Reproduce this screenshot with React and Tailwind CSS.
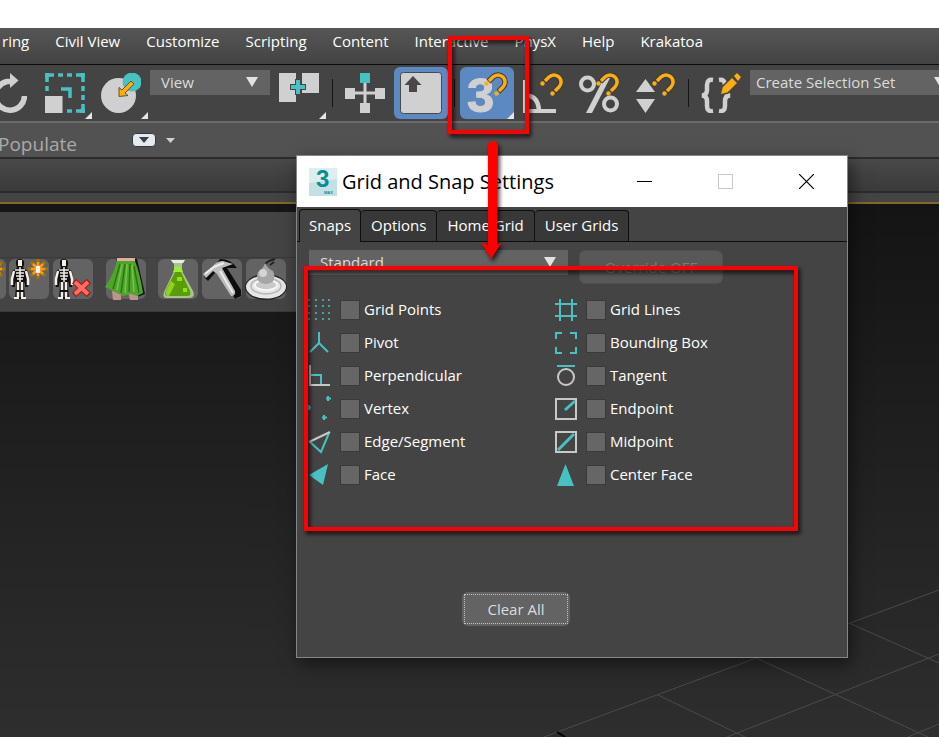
import React, { useState } from "react";

const menuItems = [
  "ring",
  "Civil View",
  "Customize",
  "Scripting",
  "Content",
  "Interactive",
  "PhysX",
  "Help",
  "Krakatoa",
];

const Svg = ({ children, className = "size-10", viewBox = "0 0 40 40" }) => (
  <svg className={`${className} shrink-0`} viewBox={viewBox} fill="none" aria-hidden="true">
    {children}
  </svg>
);

// Orange magnet shared by all the snap toggles
const Magnet = () => (
  <>
    <path d="M21.500 8.500 L26 4 A7 7 0 0 1 36 14 L31.500 18.500" stroke="#3a3a3a" strokeWidth="5.500" />
    <path d="M22 8 L26 4 A7 7 0 0 1 36 14 L32 18" stroke="#fdae0f" strokeWidth="3.500" />
    <circle cx="19.500" cy="10.500" r="2.200" fill="#fdae0f" />
    <circle cx="29.500" cy="20.500" r="2.200" fill="#fdae0f" />
  </>
);

const ToolButton = ({ label, flyout, active, className = "", children }) => (
  <button
    type="button"
    aria-label={label}
    className={`relative flex h-[52px] shrink-0 items-center ${
      active ? "w-[54px] justify-center rounded-md bg-[#5d89c3]" : ""
    } ${flyout && !active ? "w-[47px]" : ""} ${className}`}
  >
    {children}
    {flyout && (
      <svg className="absolute right-0 bottom-0 size-[7px]" viewBox="0 0 7 7" aria-hidden="true">
        <path d="M7 0 V7 H0 Z" fill="#e4e4e4" />
      </svg>
    )}
  </button>
);

const Separator = ({ className }) => <div className={`h-7 w-px shrink-0 bg-[#161616] ${className}`} />;

const DropDown = ({ label, value, className, selectClass, arrowClass }) => (
  <div className={`relative overflow-hidden ${className}`}>
    <select
      aria-label={label}
      defaultValue={value}
      className={`h-full w-full appearance-none bg-[#636363] text-[#dcdcdc] outline-none ${selectClass}`}
    >
      <option>{value}</option>
    </select>
    <svg
      className={`pointer-events-none absolute top-[7px] h-[10px] w-3 ${arrowClass}`}
      viewBox="0 0 12 10"
      aria-hidden="true"
    >
      <path d="M0 0 H12 L6 10 Z" fill="#e2e2e2" />
    </svg>
  </div>
);

const MenuBar = () => (
  <nav className="flex h-[37px] items-center gap-[26px] overflow-hidden border-b border-[#0c0c0c] bg-linear-to-b from-[#565656] to-[#434343] pb-2.5 pl-0.5 text-[15px] text-white">
    {menuItems.map((item) => (
      <button key={item} type="button" className="shrink-0 whitespace-nowrap">
        {item}
      </button>
    ))}
  </nav>
);

const MainToolbar = () => (
  <div className="flex h-[58px] items-start overflow-hidden border-b-2 border-[#6a6a6a] bg-[#444] pt-0.5 text-[15px]">
    <ToolButton label="Rotate">
      <Svg className="h-10 w-[27px]" viewBox="13 0 27 40">
        <path d="M25 8.500 H20 A14.500 14.500 0 1 0 37.500 23" stroke="#d0d0d0" strokeWidth="5.500" />
        <path d="M23 0 L31.500 7.500 L23 15 Z" fill="#d0d0d0" />
      </Svg>
    </ToolButton>
    <ToolButton label="Scale" flyout className="ml-[18px]">
      <Svg>
        <path d="M2 18 V2 H38 V38 H19" stroke="#47c1c1" strokeWidth="3.500" strokeDasharray="5 4" />
        <path d="M0 2 H5 M2 0 V5 M35 2 H40 M38 0 V5 M38 35 V40 M35 38 H40" stroke="#47c1c1" strokeWidth="3.500" />
        <path d="M16 16 H25 V25" stroke="#47c1c1" strokeWidth="3.500" />
        <rect x="0" y="23" width="17.500" height="17" fill="#d0d0d0" />
      </Svg>
    </ToolButton>
    <ToolButton label="Select and Place" flyout className="ml-[9px]">
      <Svg>
        <circle cx="17.500" cy="22.500" r="17.500" fill="#d0d0d0" />
        <circle cx="31" cy="9" r="9.500" fill="#47c1c1" />
        <path
          d="M30 8 L33 11 L24 20 L27 22.500 L18 23.500 L18 14.500 L21 17 Z"
          fill="#fdae0f"
          stroke="#6b5320"
          strokeWidth="1"
        />
      </Svg>
    </ToolButton>
    <DropDown
      label="Reference Coordinate System"
      value="View"
      className="mt-[3px] ml-0.5 h-[25px] w-[120px] shrink-0"
      selectClass="pl-[11px]"
      arrowClass="right-3"
    />
    <ToolButton label="Use Pivot Point Center" flyout className="ml-[9px]">
      <Svg>
        <rect x="0" y="0" width="17" height="29" fill="#d0d0d0" />
        <rect x="23" y="0" width="17" height="20" fill="#d0d0d0" />
        <path d="M19 6 V22 M11 14 H27" stroke="#444" strokeWidth="6" />
        <path d="M19 7 V21 M12 14 H26" stroke="#47c1c1" strokeWidth="4" />
      </Svg>
    </ToolButton>
    <Separator className="mt-3 ml-1.5" />
    <ToolButton label="Select and Manipulate" className="ml-3">
      <Svg>
        <path d="M20 8 V32 M8 20 H32" stroke="#d0d0d0" strokeWidth="3" />
        <rect x="15" y="0" width="10" height="10" fill="#47c1c1" />
        <rect x="15" y="30" width="10" height="10" fill="#d0d0d0" />
        <rect x="0" y="15" width="10" height="11" fill="#d0d0d0" />
        <rect x="30" y="15" width="10" height="11" fill="#d0d0d0" />
      </Svg>
    </ToolButton>
    <ToolButton label="Keyboard Shortcut Override" active className="ml-[9px]">
      <Svg className="size-[42px]" viewBox="0 0 42 42">
        <rect x="0.500" y="0.500" width="41" height="41" rx="3" fill="#d0d0d0" stroke="#4a4a4a" />
        <path d="M13 4 L21.500 13 H17 V20 H9 V13 H4.500 Z" fill="#484848" />
      </Svg>
    </ToolButton>
    <Separator className="mt-3 ml-1.5" />
    <ToolButton label="Snaps Toggle" active flyout className="ml-[5px]">
      <Svg className="size-10 overflow-visible">
        <text
          x="0"
          y="39"
          fontFamily="Liberation Sans, sans-serif"
          fontWeight="bold"
          fontSize="49"
          fill="#d0d0d0"
          stroke="#d0d0d0"
          strokeWidth="1"
        >
          3
        </text>
        <Magnet />
      </Svg>
    </ToolButton>
    <ToolButton label="Angle Snap" className="ml-[9px]">
      <Svg>
        <path d="M2 7 V38 H33" stroke="#d0d0d0" strokeWidth="4" />
        <path d="M3 22.500 Q15.500 23 16 38" stroke="#d0d0d0" strokeWidth="4.500" />
        <Magnet />
      </Svg>
    </ToolButton>
    <ToolButton label="Percent Snap" className="ml-4">
      <Svg>
        <circle cx="8.500" cy="11" r="6.500" stroke="#d0d0d0" strokeWidth="4" />
        <circle cx="31.500" cy="31" r="6.500" stroke="#d0d0d0" strokeWidth="4" />
        <path d="M7 40 L26 3 H32 L13 40 Z" fill="#d0d0d0" />
        <Magnet />
      </Svg>
    </ToolButton>
    <ToolButton label="Spinner Snap" className="ml-4">
      <Svg>
        <path d="M1 19 L10.500 6 L20 19 Z M1 26 H20 L10.500 40 Z" fill="#d0d0d0" />
        <Magnet />
      </Svg>
    </ToolButton>
    <Separator className="mt-3 ml-[13px]" />
    <ToolButton label="Edit Named Selection Sets" className="ml-3">
      <Svg>
        <path
          d="M12 7 Q6 6 6 12 V17 Q6 22 1 22.500 Q6 23 6 28 V33 Q6 39 12 38"
          stroke="#d0d0d0"
          strokeWidth="4.500"
        />
        <path
          d="M18 7 Q24 6 24 12 V17 Q24 22 29 22.500 Q24 23 24 28 V33 Q24 39 18 38"
          stroke="#d0d0d0"
          strokeWidth="4.500"
        />
        <path d="M19 22 L21 14 L31 4 L37 10 L27 20 Z" fill="#fdae0f" stroke="#444" strokeWidth="1.500" />
        <path d="M33 3 L36 0 L40 4 L37 8 Z" fill="#fdae0f" />
      </Svg>
    </ToolButton>
    <DropDown
      label="Named Selection Sets"
      value="Create Selection Set"
      className="mt-[3px] ml-[9px] h-[25px] min-w-0 flex-1"
      selectClass="pl-1.5"
      arrowClass="-right-[7px]"
    />
  </div>
);

const Skeleton = () => (
  <g transform="translate(-1 0)">
    <path d="M12 0 Q17 0 16 6 L15 9 L20 12 L21 22 L20 28 H17 V22 L16 26 L17 40 H7 L8 26 L7 22 V28 H4 L3 22 L4 12 L9 9 L8 5 Q7 0 12 0 Z" fill="#111" />
    <path d="M10 1 H14 V7 H10 Z" fill="#f4efe8" />
    <path d="M12 8 V23 M7 11 H17 M8 14 H16 M8 17 H16 M9 20 H15" stroke="#f4efe8" strokeWidth="1.500" />
    <path d="M6 12 L4 20 V26 M18 12 L20 20 V26 M10 23 V31 M14 23 V31 M10 33 V38 M14 33 V38" stroke="#f4efe8" strokeWidth="2.500" />
    <path d="M6 39 H11 M13 39 H18" stroke="#f4efe8" strokeWidth="2" />
  </g>
);

const Spark = () => (
  <>
    <path d="M29 0 V20 M19 10 H39 M22 3 L36 17 M36 3 L22 17" stroke="#a87400" strokeWidth="3" />
    <path d="M29 3 V17 M22 10 H36 M24 5 L34 15 M34 5 L24 15" stroke="#ff9a16" strokeWidth="2.500" />
    <rect x="27" y="7" width="4" height="7" fill="#e8f4ff" />
  </>
);

const scriptTools = [
  {
    name: "Create Bones",
    gap: "ml-[3px]",
    icon: (
      <>
        <Skeleton />
        <Spark />
      </>
    ),
  },
  {
    name: "Delete Bones",
    gap: "ml-1",
    icon: (
      <>
        <Skeleton />
        <path d="M21 22 L36 36 M36 22 L21 36" stroke="#a51d17" strokeWidth="6" />
        <path d="M22 23 L35 35 M35 23 L22 35" stroke="#ff6c62" strokeWidth="4" />
      </>
    ),
  },
  {
    name: "Cloth",
    gap: "ml-[13px]",
    icon: (
      <>
        <path d="M10 0 H31 L39 35 L31 38 Z" fill="#111" />
        <path d="M6 32 H15 V41 H7 Z M22 33 H32 V41 H24 Z" fill="#bf938b" />
        <path d="M11 -1 H29 V3 H11 Z" fill="#e3ada2" />
        <path d="M11 2 H29 Q34 14 37 34 L31 37 L25 35 L17 37 L11 34 L5 31 L-1 28 Q7 17 11 2 Z" fill="#4fa52a" />
        <path d="M14 5 L7 30 M19 5 L15 34 M24 5 L23 33 M28 7 L33 34" stroke="#2f7414" strokeWidth="1.500" />
        <path d="M16 5 L11 31 M21 5 L19 34 M26 6 L28 33" stroke="#72c649" strokeWidth="1.500" />
      </>
    ),
  },
  {
    name: "Flask",
    gap: "ml-3",
    icon: (
      <>
        <path d="M13 1 H27 L24 5 V12 L35 32 Q38 39 31 39 H9 Q4 39 6 33 L16 12 V5 Z" fill="#a9c58c" />
        <path d="M13 1 H27 L25 4 H15 Z" fill="#e4f0da" />
        <path d="M17 8 H23 V13 L32 32 Q34 37 29 37 H10 Q5 37 8 31 L17 13 Z" fill="#5c9c06" />
        <path d="M17 8 H23 L25 13 H15 Z" fill="#9cf02b" />
        <path d="M13 22 L8 32 Q6 37 11 37 L17 25 Z" fill="#8fd21f" />
        <path d="M19 18 H24 V22 H19 Z M25 29 H29 V33 H25 Z" fill="#8be516" />
      </>
    ),
  },
  {
    name: "Hammer",
    gap: "ml-1",
    icon: (
      <>
        <path d="M17 11 L33 40 L39 37 V31 L25 9 L35 9 Q29 0 18 0 L9 11 L2 18 L6 22 L13 14 Z" fill="#0d0d0d" />
        <path d="M1 15 L11 7 Q15 2 21 2 L31 5 L20 9 L33 32 Q34 37 29 37 L15 15 L11 12 L4 19 Z" fill="#bcbcbc" />
        <path d="M3 15 L12 8 L22 4 M18 12 L31 34" stroke="#ececec" strokeWidth="2" />
      </>
    ),
  },
  {
    name: "Liquid",
    gap: "ml-1",
    icon: (
      <>
        <path d="M19 5 L23 2 L29 0 M24 6 L28 3" stroke="#222" strokeWidth="2" />
        <ellipse cx="20" cy="28" rx="21" ry="13" fill="#222" />
        <ellipse cx="20" cy="28" rx="20" ry="11.500" fill="#e6e6e6" />
        <ellipse cx="20" cy="27" rx="15" ry="8" stroke="#b4b4b4" strokeWidth="1.500" />
        <ellipse cx="20" cy="26" rx="11" ry="5" fill="#c9c9c9" stroke="#fafafa" strokeWidth="1.500" />
        <path d="M19 4 Q22 10 27 12 Q32 24 20 25 Q8 24 12 13 Q17 10 19 4 Z" fill="#a6a6a6" />
        <circle cx="17" cy="14" r="4" fill="#d4d4d4" />
      </>
    ),
  },
];

const ScriptToolbar = () => (
  <div className="w-80 border-t-8 border-[#161616] bg-[#444]">
    <div className="h-[46px] border-b border-[#3a3a3a]" />
    <div className="flex h-[54px] items-start overflow-hidden border-b border-[#3a3a3a] pt-px">
      <button type="button" aria-label="Bone Tools" className="h-10 w-1.5 shrink-0 overflow-hidden rounded-r-md bg-[#636363]">
        <Svg className="h-10 w-1.5" viewBox="34 0 6 40">
          <Spark />
        </Svg>
      </button>
      {scriptTools.map((tool) => (
        <button
          key={tool.name}
          type="button"
          aria-label={tool.name}
          className={`size-10 shrink-0 rounded-md bg-[#636363] ${tool.gap}`}
        >
          <Svg className="size-10 overflow-visible">{tool.icon}</Svg>
        </button>
      ))}
    </div>
  </div>
);

const teal = "#47c1c1";

const snapOptions = [
  {
    name: "Grid Points",
    icon: [1, 7, 14, 20].flatMap((y) =>
      [0, 7, 14, 20].map((x) => <circle key={`${x}-${y}`} cx={x} cy={y} r="1" fill={teal} />)
    ),
  },
  {
    name: "Grid Lines",
    icon: <path d="M5 0 V22 M17 0 V22 M0 5 H22 M0 17 H22" stroke={teal} strokeWidth="2" />,
  },
  { name: "Pivot", icon: <path d="M10 0 V11 L1 20 M10 11 L19 20" stroke={teal} strokeWidth="2" /> },
  {
    name: "Bounding Box",
    icon: <path d="M1 7 V1 H7 M15 1 H21 V7 M21 15 V21 H15 M7 21 H1 V15" stroke={teal} strokeWidth="2" />,
  },
  {
    name: "Perpendicular",
    icon: (
      <>
        <path d="M1 0 V20 H21" stroke="#c8c8c8" strokeWidth="2" />
        <path d="M2 10 H12 V19" stroke={teal} strokeWidth="2" />
      </>
    ),
  },
  {
    name: "Tangent",
    icon: (
      <>
        <path d="M2 1 H20" stroke={teal} strokeWidth="2" />
        <circle cx="11" cy="12" r="8" stroke="#c8c8c8" strokeWidth="2" />
      </>
    ),
  },
  {
    name: "Vertex",
    icon: <path d="M19 -2 V3 M17 0.500 H22 M15 17 V22 M13 19.500 H18 M0 7 V12 M-1 9.500 H2" stroke={teal} strokeWidth="2" />,
  },
  {
    name: "Endpoint",
    icon: (
      <>
        <rect x="1" y="1" width="20" height="20" stroke="#c8c8c8" strokeWidth="2" />
        <path d="M10 12 L20 3" stroke={teal} strokeWidth="3" />
      </>
    ),
  },
  {
    name: "Edge/Segment",
    icon: (
      <>
        <path d="M1 11 L12 21 L20 2" stroke={teal} strokeWidth="2" />
        <path d="M0 11 L21 1" stroke="#c8c8c8" strokeWidth="2" />
      </>
    ),
  },
  {
    name: "Midpoint",
    icon: (
      <>
        <rect x="1" y="1" width="20" height="20" stroke="#c8c8c8" strokeWidth="2" />
        <path d="M3 19 L19 3" stroke={teal} strokeWidth="3" />
      </>
    ),
  },
  { name: "Face", icon: <path d="M0 11 L19 0 L14 21 Z" fill={teal} /> },
  { name: "Center Face", icon: <path d="M10.500 0 L19 22 H2 Z" fill={teal} /> },
];

const tabs = ["Snaps", "Options", "Home Grid", "User Grids"];

const SnapDialog = () => {
  const [activeTab, setActiveTab] = useState("Snaps");
  const [checked, setChecked] = useState([]);

  const toggle = (name) =>
    setChecked((prev) => (prev.includes(name) ? prev.filter((item) => item !== name) : [...prev, name]));

  return (
    <section
      aria-label="Grid and Snap Settings"
      className="absolute top-[155px] left-[296px] flex h-[503px] w-[552px] flex-col border border-[#858585] bg-[#444] text-[15px] text-white shadow-[3px_6px_16px_rgba(0,0,0,0.5)]"
    >
      <header className="flex h-[51px] items-center bg-white pl-3 text-black">
        <svg className="size-7 shrink-0" viewBox="0 0 28 28" aria-hidden="true">
          <rect width="28" height="28" fill="#dceef0" />
          <path d="M0 15 L28 11 V28 H0 Z" fill="#c3e1e5" />
          <text x="7" y="19" fontFamily="Liberation Sans, sans-serif" fontWeight="bold" fontSize="24" fill="#0b8c94">
            3
          </text>
          <text x="15" y="26" fontFamily="Liberation Sans, sans-serif" fontWeight="bold" fontSize="4" fill="#0b8c94">
            MAX
          </text>
        </svg>
        <h1 className="ml-[5px] flex-1 text-xl whitespace-nowrap">Grid and Snap Settings</h1>
        <div className="flex pr-[33px]">
          <button type="button" aria-label="Minimize" className="mr-[66px]">
            <Svg className="size-[15px]" viewBox="0 0 15 15">
              <path d="M0 7.500 H15" stroke="#000" />
            </Svg>
          </button>
          <button type="button" aria-label="Maximize" disabled className="mr-[66px]">
            <Svg className="size-[15px]" viewBox="0 0 15 15">
              <rect x="0.500" y="0.500" width="14" height="14" stroke="#c8c8c8" />
            </Svg>
          </button>
          <button type="button" aria-label="Close">
            <Svg className="size-[15px]" viewBox="0 0 15 15">
              <path d="M0 0 L15 15 M15 0 L0 15" stroke="#000" strokeWidth="1.200" />
            </Svg>
          </button>
        </div>
      </header>

      <div role="tablist" className="flex h-[35px] items-end border-b border-[#0e0e0e] pt-0.5 pl-0.5">
        {tabs.map((tab) => (
          <button
            key={tab}
            type="button"
            role="tab"
            aria-selected={tab === activeTab}
            onClick={() => setActiveTab(tab)}
            className={`rounded-t-sm border border-b-0 border-[#0e0e0e] pb-0.5 whitespace-nowrap ${
              tab === activeTab ? "-mb-px h-[33px] bg-[#444] px-[9px]" : "h-[31px] border-l-0 bg-[#383838] px-2.5"
            }`}
          >
            {tab}
          </button>
        ))}
      </div>

      <div className="flex items-start gap-[11px] pt-2 pl-3">
        <DropDown
          label="Snap Type"
          value="Standard"
          className="h-[25px] w-[259px]"
          selectClass="pl-[11px]"
          arrowClass="right-3"
        />
        <button
          type="button"
          disabled
          className="h-[34px] w-36 rounded-md border border-[#4e4e4e] bg-[#585858] text-[#7c7c7c]"
        >
          Override OFF
        </button>
      </div>

      <div className="grid grid-cols-[246px_1fr] pt-[9px] pl-3">
        {snapOptions.map(({ name, icon }) => (
          <label key={name} className="flex h-[33px] items-center whitespace-nowrap">
            <Svg className="size-[22px] overflow-visible" viewBox="0 0 22 22">
              {icon}
            </Svg>
            <input
              type="checkbox"
              checked={checked.includes(name)}
              onChange={() => toggle(name)}
              className="ml-[9px] size-5 appearance-none border border-[#3a3a3a] bg-[#666] checked:bg-[#47c1c1]"
            />
            <span className="ml-1">{name}</span>
          </label>
        ))}
      </div>

      <footer className="mt-auto flex justify-center pb-[31px]">
        <button
          type="button"
          onClick={() => setChecked([])}
          className="mr-28 h-[34px] w-[108px] rounded-md bg-[#636363] p-0.5 text-[#dcdcdc]"
        >
          <span className="flex h-full items-center justify-center border border-dotted border-[#c0c0c0]">
            Clear All
          </span>
        </button>
      </footer>
    </section>
  );
};

const Annotations = () => (
  <div className="pointer-events-none">
    <div className="absolute top-9 left-[448px] h-[98px] w-[81px] border-4 border-[#f00] drop-shadow-[2px_3px_2px_rgba(0,0,0,0.8)]" />
    <div className="absolute top-[266px] left-[304px] h-[265px] w-[494px] border-4 border-[#f00] drop-shadow-[2px_3px_2px_rgba(0,0,0,0.8)]" />
    <svg
      className="absolute top-[141px] left-[481px] h-[118px] w-[21px] overflow-visible drop-shadow-[2px_3px_2px_rgba(0,0,0,0.7)]"
      viewBox="0 0 21 118"
      aria-hidden="true"
    >
      <path d="M7 4 Q8 0 12 0 Q16 0 17 4 L16 104 L21 101 L10 118 L0 101 L7 104 Z" fill="#f00" />
    </svg>
  </div>
);

const Viewport = () => (
  <main className="relative flex-1 overflow-hidden bg-linear-to-b from-[#141414] to-[#2e2e2e]">
    <ScriptToolbar />
    <svg
      className="absolute right-0 bottom-0 h-[147px] w-[395px]"
      viewBox="0 0 395 147"
      stroke="#4b4b4b"
      aria-hidden="true"
    >
      <path d="M0 147 L395 0 M305 33 L395 73 M212 68 L384 147 M114 105 L201 147 M183 147 L395 64 M364 147 L395 134" />
      <path d="M13 142 L21 147" stroke="#000" strokeWidth="2" />
    </svg>
  </main>
);

const App = () => (
  <div className="relative flex min-h-screen flex-col overflow-hidden bg-white pt-7 font-['Open_Sans',sans-serif]">
    <MenuBar />
    <MainToolbar />
    <div className="flex h-9 items-center border-b-2 border-[#2c2c2c] bg-[#525252]">
      <span className="-ml-0.5 pt-2 text-[19px] text-[#a9a9a9]">Populate</span>
      <button type="button" aria-label="Minimize Ribbon" className="ml-[55px] flex h-3.5 w-6 items-center justify-center rounded-sm border border-[#2f3b44] bg-[#e6eaee]">
        <Svg className="h-1.5 w-2.5" viewBox="0 0 10 6">
          <path d="M0 0 H10 L5 6 Z" fill="#333f4a" />
        </Svg>
      </button>
      <button type="button" aria-label="Ribbon Options" className="ml-2.5">
        <Svg className="h-[5px] w-[9px]" viewBox="0 0 9 5">
          <path d="M0 0 H9 L4.500 5 Z" fill="#d0d0d0" />
        </Svg>
      </button>
    </div>
    <div className="h-[34px] border-b-2 border-[#2c2c2c] bg-linear-to-b from-[#494949] to-[#3a3a3a]" />
    <div className="h-[11px] border-b-2 border-[#80682e] bg-[#444]" />
    <Viewport />
    <SnapDialog />
    <Annotations />
  </div>
);

export default App;
